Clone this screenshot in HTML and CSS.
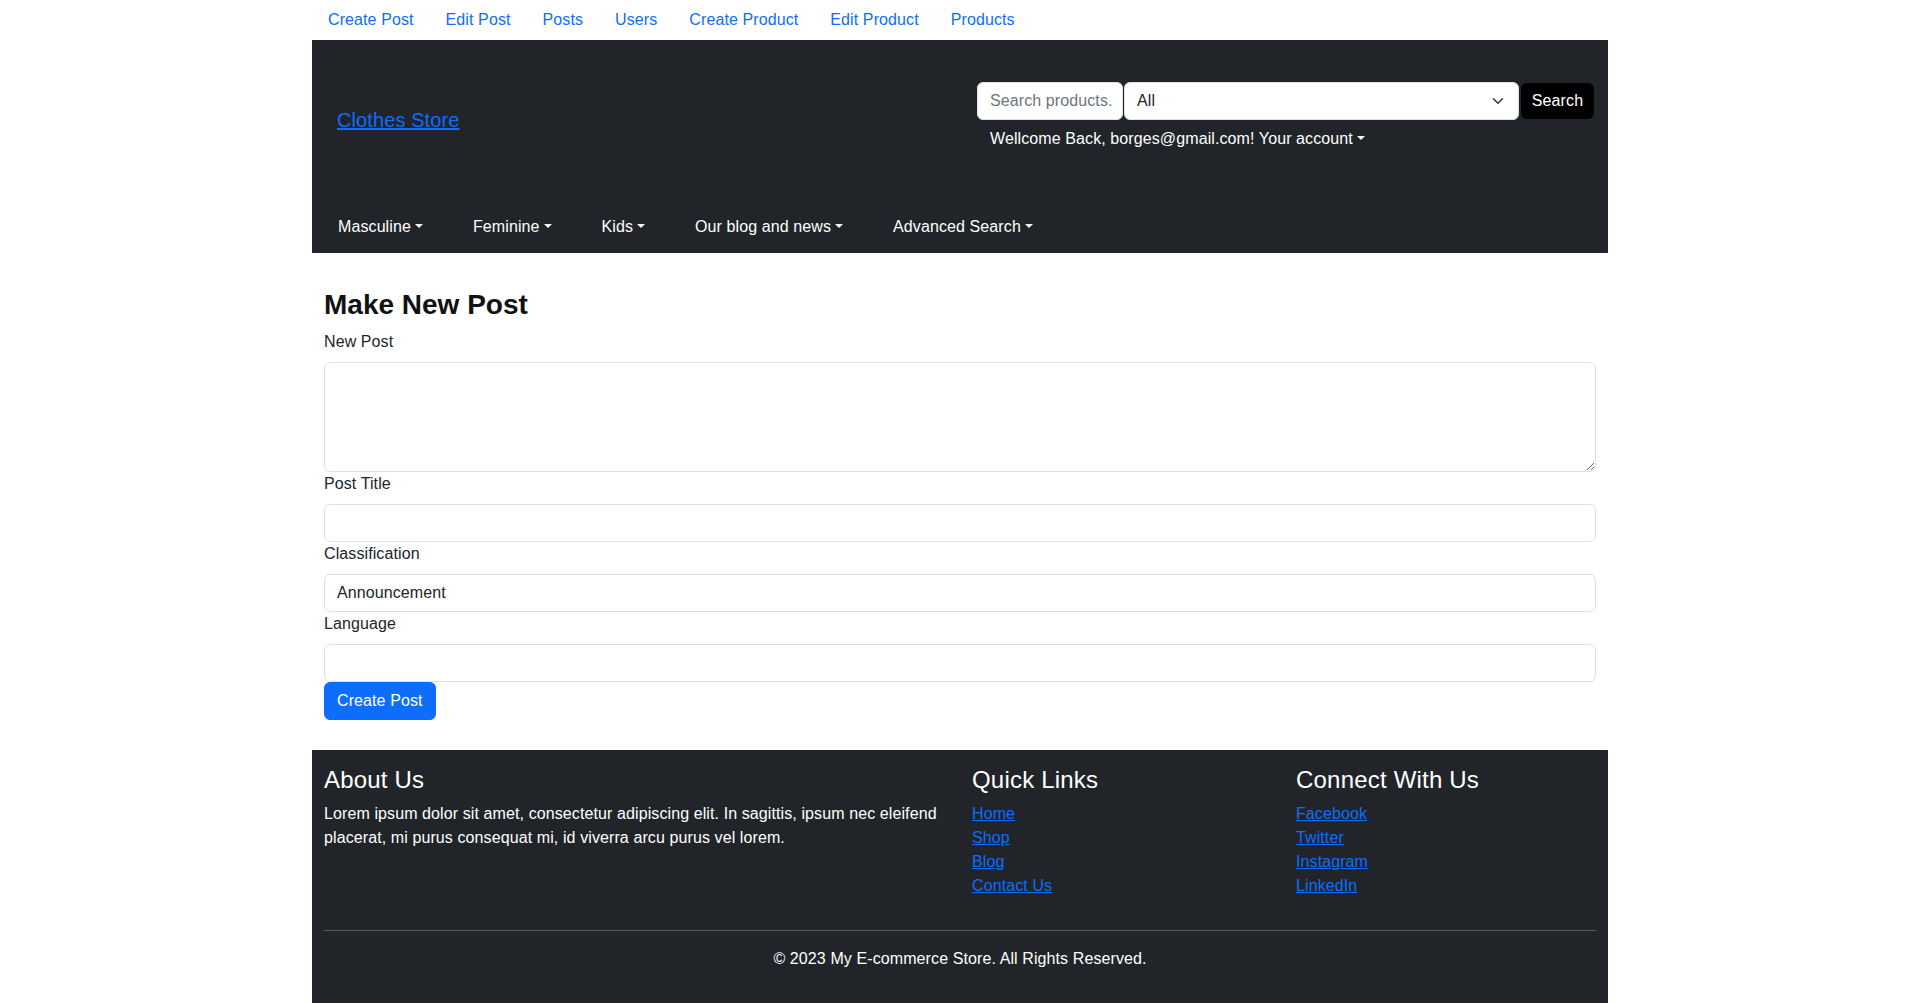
FILE: index.html
```html
<!DOCTYPE html>
<html lang="en">
<head>
<meta charset="utf-8">
<title>Make New Post</title>
<link rel="stylesheet" href="styles.css">
</head>
<body>
<div class="container">
  <ul class="topnav">
    <li><a href="#">Create Post</a></li>
    <li><a href="#">Edit Post</a></li>
    <li><a href="#">Posts</a></li>
    <li><a href="#">Users</a></li>
    <li><a href="#">Create Product</a></li>
    <li><a href="#">Edit Product</a></li>
    <li><a href="#">Products</a></li>
  </ul>

  <header class="masthead">
    <div class="masthead-top">
      <a class="brand" href="#">Clothes Store</a>
      <div class="account-area">
        <form class="search">
          <input class="search-input" type="text" placeholder="Search products...">
          <div class="search-select">
            <span>All</span>
            <svg class="chevron" width="16" height="12" viewBox="0 0 16 16"><path d="m2 5 6 6 6-6" fill="none" stroke="#343a40" stroke-width="2" stroke-linecap="round" stroke-linejoin="round"/></svg>
          </div>
          <button class="search-btn" type="button">Search</button>
        </form>
        <div class="welcome">Wellcome Back, borges@gmail.com! <span class="toggle">Your account</span></div>
      </div>
    </div>
    <nav class="mainnav">
      <a class="toggle" href="#">Masculine</a>
      <a class="toggle" href="#">Feminine</a>
      <a class="toggle" href="#">Kids</a>
      <a class="toggle" href="#">Our blog and news</a>
      <a class="toggle" href="#">Advanced Search</a>
    </nav>
  </header>

  <main class="content">
    <h3 class="page-title">Make New Post</h3>
    <form class="post-form">
      <label class="form-label" for="post">New Post</label>
      <textarea class="form-control textarea" id="post"></textarea>
      <label class="form-label" for="title">Post Title</label>
      <input class="form-control" id="title" type="text">
      <label class="form-label" for="classification">Classification</label>
      <input class="form-control" id="classification" type="text" value="Announcement">
      <label class="form-label" for="language">Language</label>
      <input class="form-control" id="language" type="text">
      <button class="btn-primary" type="button">Create Post</button>
    </form>
  </main>

  <footer class="footer">
    <div class="footer-grid">
      <div class="footer-col">
        <h4>About Us</h4>
        <p>Lorem ipsum dolor sit amet, consectetur adipiscing elit. In sagittis, ipsum nec eleifend placerat, mi purus consequat mi, id viverra arcu purus vel lorem.</p>
      </div>
      <div class="footer-col">
        <h4>Quick Links</h4>
        <ul class="links">
          <li><a href="#">Home</a></li>
          <li><a href="#">Shop</a></li>
          <li><a href="#">Blog</a></li>
          <li><a href="#">Contact Us</a></li>
        </ul>
      </div>
      <div class="footer-col">
        <h4>Connect With Us</h4>
        <ul class="links">
          <li><a href="#">Facebook</a></li>
          <li><a href="#">Twitter</a></li>
          <li><a href="#">Instagram</a></li>
          <li><a href="#">LinkedIn</a></li>
        </ul>
      </div>
    </div>
    <hr class="footer-rule">
    <p class="copyright">© 2023 My E-commerce Store. All Rights Reserved.</p>
  </footer>
</div>
</body>
</html>
```
FILE: styles.css
```css
* { box-sizing: border-box; }

html, body {
  margin: 0;
  padding: 0;
  background: #fff;
}

body {
  font-family: "Liberation Sans", Arial, sans-serif;
  font-size: 16px;
  line-height: 24px;
  letter-spacing: 0.1px;
  color: #212529;
}

a { color: #0d6efd; }

.container {
  width: 1296px;
  margin: 0 auto;
}

/* top nav */
.topnav {
  list-style: none;
  margin: 0;
  padding: 0;
  display: flex;
  height: 40px;
}
.topnav a {
  display: block;
  padding: 8px 16px;
  text-decoration: none;
}

/* masthead */
.masthead {
  background: #212529;
  color: #fff;
}
.masthead-top {
  display: flex;
  align-items: center;
  height: 160px;
}
.brand {
  font-size: 20px;
  line-height: 30px;
  padding-left: 25px;
  text-decoration: underline;
}
.account-area {
  margin-left: auto;
  align-self: flex-start;
  padding-top: 42px;
  padding-right: 14px;
}
.search {
  display: flex;
  gap: 1px;
  margin: 0;
  height: 38px;
}
.search-input {
  width: 146px;
  height: 38px;
  border: 1px solid #dee2e6;
  border-radius: 6px;
  padding: 6px 10px 6px 12px;
  font: inherit;
  letter-spacing: inherit;
  color: #212529;
  background: #fff;
}
.search-input::placeholder { color: #6c757d; }
.search-select {
  width: 395px;
  height: 38px;
  display: flex;
  align-items: center;
  justify-content: space-between;
  background: #fff;
  border: 1px solid #dee2e6;
  border-radius: 6px;
  padding: 6px 12px;
  color: #212529;
}
.chevron { display: block; }
.search-btn {
  width: 73px;
  height: 36px;
  margin-top: 1px;
  margin-left: 1px;
  background: #000;
  color: #fff;
  border: 0;
  border-radius: 6px;
  font: inherit;
  letter-spacing: inherit;
  padding: 0;
}
.welcome {
  margin-top: 7px;
  padding-left: 13px;
  line-height: 24px;
}

.toggle::after {
  content: "";
  display: inline-block;
  margin-left: 4px;
  vertical-align: 4px;
  border-top: 4.8px solid;
  border-left: 4.8px solid transparent;
  border-right: 4.8px solid transparent;
  border-bottom: 0;
}

.mainnav {
  display: flex;
  align-items: center;
  height: 53px;
  padding-left: 1px;
  padding-top: 1px;
}
.mainnav a {
  color: #fff;
  text-decoration: none;
  padding: 0 25px;
}

/* content */
.content {
  padding: 35px 12px 0;
  margin-bottom: 30px;
}
.page-title {
  margin: 0 0 8px;
  font-size: 28px;
  line-height: 1.2;
  font-weight: 700;
  letter-spacing: 0;
  color: #111;
}
.post-form { margin: 0; }
.form-label {
  display: block;
  margin-bottom: 8px;
}
.form-control {
  display: block;
  width: 100%;
  height: 38px;
  padding: 6px 12px;
  font: inherit;
  letter-spacing: inherit;
  color: #212529;
  background: #fff;
  border: 1px solid #dee2e6;
  border-radius: 6px;
  margin: 0;
}
.textarea {
  height: 110px;
  resize: vertical;
}
.btn-primary {
  display: block;
  height: 38px;
  padding: 6px 12px;
  background: #0d6efd;
  color: #fff;
  border: 1px solid #0d6efd;
  border-radius: 6px;
  font: inherit;
  letter-spacing: inherit;
}

/* footer */
.footer {
  background: #212529;
  color: #fff;
  padding: 16px 0;
}
.footer-grid {
  display: grid;
  grid-template-columns: 2fr 1fr 1fr;
}
.footer-col { padding: 0 12px; }
.footer-col h4 {
  margin: 0 0 8px;
  font-size: 24px;
  line-height: 1.2;
  font-weight: 500;
  letter-spacing: 0.2px;
}
.footer-col p { margin: 0 0 16px; }
.links {
  list-style: none;
  margin: 0 0 16px;
  padding: 0;
}
.footer-rule {
  margin: 16px 12px;
  border: 0;
  border-top: 1px solid rgba(255,255,255,0.25);
}
.copyright {
  margin: 0 0 16px;
  text-align: center;
}
```
